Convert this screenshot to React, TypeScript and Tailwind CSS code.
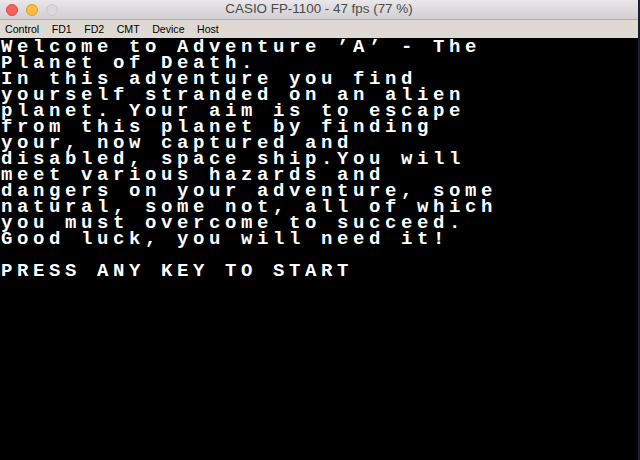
import { memo } from "react";

const screenLines = [
  "Welcome to Adventure ’A’ - The",
  "Planet of Death.",
  "In this adventure you find",
  "yourself stranded on an alien",
  "planet. Your aim is to escape",
  "from this planet by finding",
  "your, now captured and",
  "disabled, space ship.You will",
  "meet various hazards and",
  "dangers on your adventure, some",
  "natural, some not, all of which",
  "you must overcome to succeed.",
  "Good luck, you will need it!",
  "",
  "PRESS ANY KEY TO START",
];

const menuItems = ["Control", "FD1", "FD2", "CMT", "Device", "Host"];

function TrafficLights() {
  return (
    <div className="flex items-center gap-[8px] pl-[6px]">
      <span className="size-[12px] rounded-full border border-[#e0443e] bg-[#fc605c]" />
      <span className="size-[12px] rounded-full border border-[#dea123] bg-[#fdbc40]" />
      <span className="size-[12px] rounded-full border border-[#c9c9c9] bg-[#d9d9d9]" />
    </div>
  );
}

function App() {
  return (
    <div className="flex h-[460px] w-[640px] bg-[#1b1f2b]">
      <div className="flex w-[638px] flex-col bg-black font-['Liberation_Sans',Arial,sans-serif]">
        <div className="relative flex h-[20px] items-center border-b border-[#b0aeb0] bg-gradient-to-b from-[#e9e7e9] to-[#d1cfd1]">
          <TrafficLights />
          <div className="absolute inset-0 flex items-center justify-center text-[13.4px] text-[#4a4a4a]">
            CASIO FP-1100 - 47 fps (77 %)
          </div>
        </div>
        <div className="flex h-[18px] items-center bg-[#dedad3] pl-[5px] pt-[1px] text-[10.6px] text-black">
          {menuItems.map((item) => (
            <span key={item} className="mr-[12.5px] leading-none">
              {item}
            </span>
          ))}
        </div>
        <div className="flex-1 pl-[1px] pt-[1px] font-['Liberation_Mono','DejaVu_Sans_Mono',monospace] text-[19px] font-bold leading-[16px] tracking-[4.6px] text-white">
          {screenLines.map((line, idx) => (
            <div key={idx} className="h-[16px] whitespace-pre">
              {line}
            </div>
          ))}
        </div>
      </div>
    </div>
  );
}

export default memo(App);
